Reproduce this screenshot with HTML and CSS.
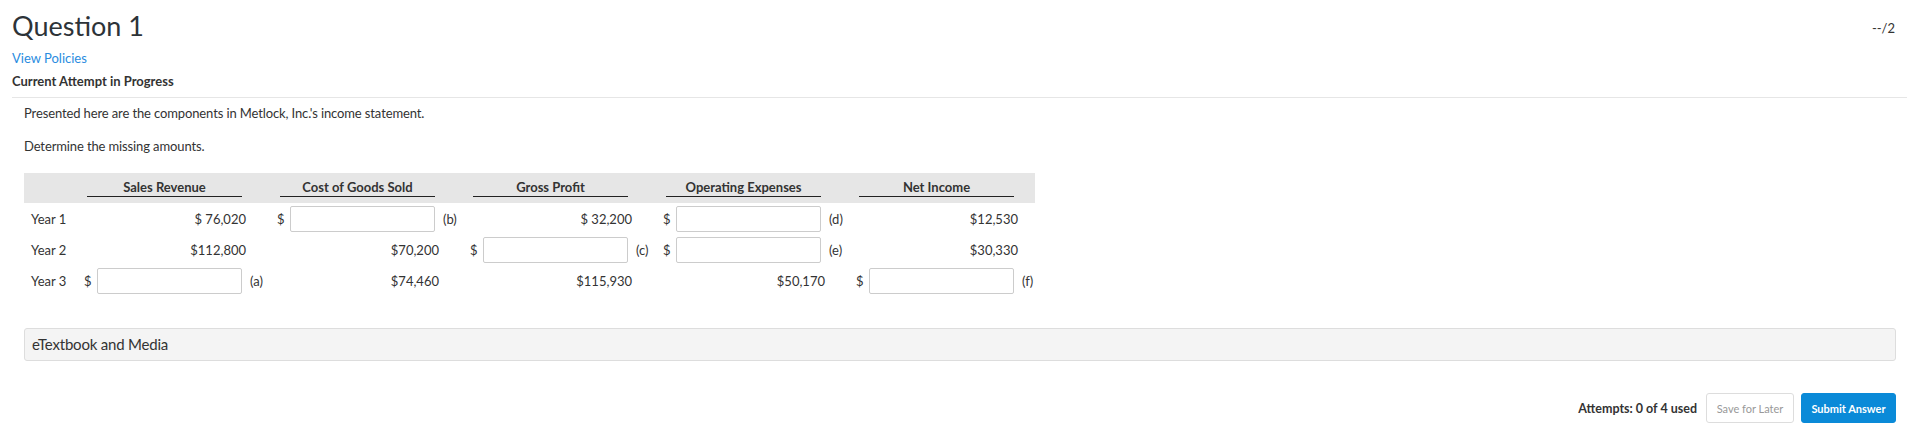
FILE: index.html
```html
<!DOCTYPE html>
<html lang="en">
<head>
    <meta charset="UTF-8">
    <meta name="viewport" content="width=device-width, initial-scale=1.0">
    <title>Question 1</title>
    <link rel="stylesheet" href="styles.css">
</head>
<body>
    <div class="page">
        <div class="q-head">
            <div>
                <h1 class="q-title">Question 1</h1>
                <a class="policies" href="#">View Policies</a>
                <div class="attempt">Current Attempt in Progress</div>
            </div>
            <div class="score">--/2</div>
        </div>

        <div class="q-body">
            <p class="prompt">Presented here are the components in Metlock, Inc.'s income statement.</p>
            <p class="prompt second">Determine the missing amounts.</p>

            <div class="sheet">
                <div class="row head">
                    <span></span>
                    <span class="col-title">Sales Revenue</span><span></span>
                    <span class="col-title">Cost of Goods Sold</span><span></span>
                    <span class="col-title">Gross Profit</span><span></span>
                    <span class="col-title">Operating Expenses</span><span></span>
                    <span class="col-title">Net Income</span><span></span>
                </div>

                <div class="row first">
                    <span class="year">Year 1</span>
                    <span></span><span class="val">$ 76,020</span><span></span>
                    <span class="cur">$</span><span class="field"><input type="text"></span><span class="tag">(b)</span>
                    <span></span><span class="val">$ 32,200</span><span></span>
                    <span class="cur">$</span><span class="field"><input type="text"></span><span class="tag">(d)</span>
                    <span></span><span class="val">$12,530</span><span></span>
                </div>

                <div class="row">
                    <span class="year">Year 2</span>
                    <span></span><span class="val">$112,800</span><span></span>
                    <span></span><span class="val">$70,200</span><span></span>
                    <span class="cur">$</span><span class="field"><input type="text"></span><span class="tag">(c)</span>
                    <span class="cur">$</span><span class="field"><input type="text"></span><span class="tag">(e)</span>
                    <span></span><span class="val">$30,330</span><span></span>
                </div>

                <div class="row">
                    <span class="year">Year 3</span>
                    <span class="cur">$</span><span class="field"><input type="text"></span><span class="tag">(a)</span>
                    <span></span><span class="val">$74,460</span><span></span>
                    <span></span><span class="val">$115,930</span><span></span>
                    <span></span><span class="val">$50,170</span><span></span>
                    <span class="cur">$</span><span class="field"><input type="text"></span><span class="tag">(f)</span>
                </div>
            </div>
        </div>

        <div class="q-foot">
            <div class="media">eTextbook and Media</div>
            <div class="actions">
                <span class="attempts">Attempts: 0 of 4 used</span>
                <button class="btn save">Save for Later</button>
                <button class="btn submit">Submit Answer</button>
            </div>
        </div>
    </div>
</body>
</html>
```

FILE: styles.css
```css
body { margin: 0; font-family: Lato, "Open Sans", sans-serif; color: #333; background: #fff; }
.page { padding: 9px 13px 0 12px; }

.q-head { display: flex; justify-content: space-between; align-items: flex-start; border-bottom: 1px solid #e6e6e6; padding-bottom: 7px; }
.q-title { margin: 0; font-size: 27px; line-height: 34px; font-weight: 400; color: #2d3338; }
.policies { display: block; margin-top: 6px; font-size: 13px; line-height: 18px; color: #2a8ce0; text-decoration: none; }
.attempt { margin-top: 5px; font-size: 13px; line-height: 18px; font-weight: 700; }
.score { margin-top: 10px; margin-right: 12px; font-size: 13px; line-height: 18px; }

.q-body { padding-left: 12px; }
.prompt { margin: 6px 0 0; font-size: 13px; line-height: 18px; letter-spacing: -0.12px; }
.prompt.second { margin-top: 15px; }

/* answer grid: year | $ field tag x5 */
.sheet { margin-top: 18px; width: 1011px; font-size: 13px; }
.row { display: grid; grid-template-columns: 60px repeat(4, 13px 149px 31px) 13px 149px 17px; height: 26px; align-items: center; margin-top: 5px; }
.row.first { margin-top: 3px; }
.row.head { height: 30px; margin-top: 0; background: #e6e6e6; align-items: end; }
.col-title { grid-column: span 2; margin: 0 4px 6px 3px; text-align: center; font-weight: 700; line-height: 15px; padding-bottom: 1px; border-bottom: 1px solid #222; }
.year { padding-left: 7px; }
.val { text-align: right; }
.tag { padding-left: 4px; }
.field input { display: block; box-sizing: border-box; width: 145px; height: 26px; margin: 0; border: 1px solid #ccc; border-radius: 2px; background: #fff; }

.q-foot { margin: 34px 11px 0 12px; }
.media { height: 33px; box-sizing: border-box; padding-left: 7px; line-height: 31px; font-size: 15px; letter-spacing: -0.2px; background: #f4f4f4; border: 1px solid #ddd; border-radius: 3px; }
.actions { display: flex; justify-content: flex-end; align-items: center; margin-top: 32px; }
.attempts { font-size: 12.5px; font-weight: 700; margin-right: 9px; }
.btn { height: 30px; padding: 0; font-family: Lato, sans-serif; font-size: 11px; border-radius: 3px; cursor: pointer; }
.btn.save { width: 88px; background: #fff; color: #999; border: 1px solid #ddd; }
.btn.submit { width: 95px; margin-left: 7px; background: #0a8ad8; color: #fff; border: 1px solid #0a8ad8; font-weight: 700; }
```
